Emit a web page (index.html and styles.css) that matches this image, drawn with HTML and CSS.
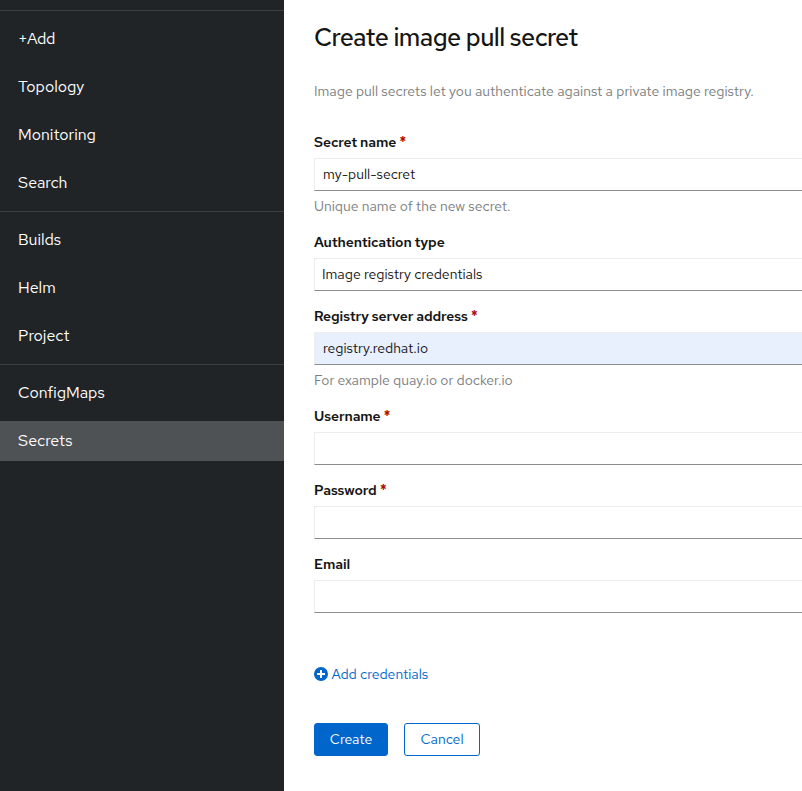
FILE: index.html
```html
<!DOCTYPE html>
<html lang="en">
<head>
<meta charset="utf-8">
<title>Create image pull secret</title>
<link rel="stylesheet" href="styles.css">
</head>
<body>
<div class="page">
  <nav class="sidebar">
    <div class="group">
      <a class="item add-item">+Add</a>
      <a class="item">Topology</a>
      <a class="item">Monitoring</a>
      <a class="item">Search</a>
    </div>
    <div class="group">
      <a class="item">Builds</a>
      <a class="item">Helm</a>
      <a class="item">Project</a>
    </div>
    <div class="group">
      <a class="item">ConfigMaps</a>
      <a class="item active">Secrets</a>
    </div>
  </nav>
  <main class="content">
    <h1>Create image pull secret</h1>
    <p class="intro">Image pull secrets let you authenticate against a private image registry.</p>
    <form>
      <label>Secret name <b>*</b></label>
      <div class="input">my-pull-secret</div>
      <p class="help">Unique name of the new secret.</p>
      <label>Authentication type</label>
      <div class="input select">Image registry credentials</div>
      <label>Registry server address <b>*</b></label>
      <div class="input filled">registry.redhat.io</div>
      <p class="help">For example quay.io or docker.io</p>
      <label>Username <b>*</b></label>
      <div class="input"></div>
      <label>Password <b>*</b></label>
      <div class="input"></div>
      <label>Email</label>
      <div class="input"></div>
    </form>
    <a class="add"><svg width="14" height="14" viewBox="0 0 14 14"><circle cx="7" cy="7" r="7"/><path d="M7 3v8M3 7h8"/></svg>Add credentials</a>
    <div class="actions"><button class="primary">Create</button><button class="secondary">Cancel</button></div>
  </main>
</div>
</body>
</html>
```
FILE: styles.css
```css
* { box-sizing: border-box; }
body { margin: 0; font: 14px/21px "Red Hat Text", Inter, sans-serif; color: #151515; background: #fff; }
.page { display: flex; height: 791px; overflow: hidden; }
.sidebar { flex: 0 0 284px; background: #212427; padding-top: 10px; }
.group { border-top: 1px solid #3c3f42; padding: 8px 0; display: grid; gap: 8px; }
.item { height: 40px; padding: 8px 18px; font-size: 16px; line-height: 24px; color: #fff; }
.add-item { letter-spacing: -0.3px; }
.active { background: #4f5255; }
.content { flex: 1; padding-left: 30px; min-width: 0; }
h1 { margin: 20px 0 0; font: 500 25px/36px "Red Hat Text", Inter, sans-serif; letter-spacing: -0.57px; }
p { margin: 0; color: #7b7e81; }
.intro { margin-top: 25px; white-space: nowrap; }
form { padding-top: 30px; }
label { display: block; font-weight: 600; letter-spacing: -0.12px; height: 26px; }
label b { font-weight: 600; font-size: 15px; line-height: 1; color: #b30d06; }
.input { height: 33px; margin-bottom: 15px; border: 1px solid #ededed; border-right: 0; border-bottom-color: #8a8d90; padding: 5px 8px; }
.select { padding-left: 7px; }
.filled { background: #e8f0fe; }
.help { margin: -10px 0 15px; }
.add { display: flex; gap: 3.5px; margin-top: 51px; height: 21px; color: #06c; }
.add svg { margin-top: 3px; }
.add circle { fill: #06c; }
.add path { stroke: #fff; stroke-width: 2; }
.actions { display: flex; gap: 16px; margin-top: 38px; }
button { height: 33px; padding: 0; border: 1px solid #06c; border-radius: 3px; font: inherit; color: #06c; background: #fff; }
.primary { width: 74px; background: #06c; color: #fff; }
.secondary { width: 76px; }
```
